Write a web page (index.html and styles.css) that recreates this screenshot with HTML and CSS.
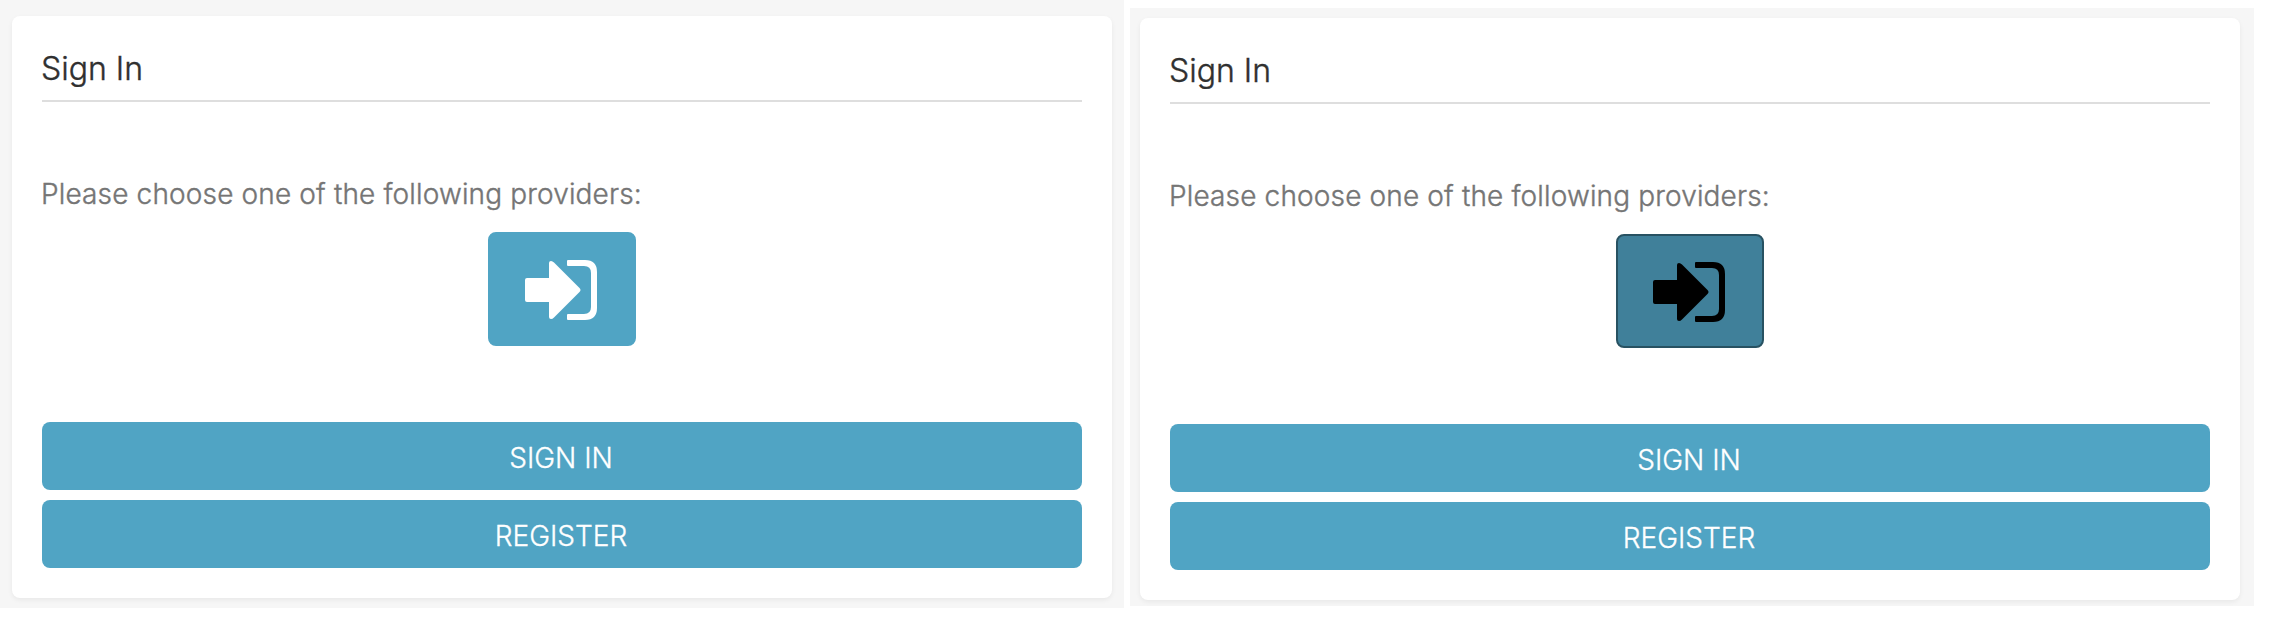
FILE: index.html
```html
<!DOCTYPE html>
<html lang="en">
<head>
<meta charset="utf-8">
<title>Sign In</title>
<link rel="stylesheet" href="styles.css">
</head>
<body>
<main class="comparison">
  <section class="panel panel-default">
    <div class="card">
      <h1 class="title">Sign In</h1>
      <p class="hint">Please choose one of the following providers:</p>
      <button class="provider" aria-label="Provider">
        <svg class="icon" viewBox="0 0 72 60" fill="currentColor"><path d="M2 18H24V3Q24 1 26 1Q27.500 1 29 2.500L54.500 28Q56.500 30 54.500 32L29 57.500Q27.500 59 26 59Q24 59 24 57V42H2Q0 42 0 40V20Q0 18 2 18Z"/><path d="M43 0H60Q72 0 72 12V48Q72 60 60 60H43Q42 60 42 59V55Q42 54 43 54H59Q66 54 66 47V13Q66 6 59 6H43Q42 6 42 5V1Q42 0 43 0Z"/></svg>
      </button>
      <div class="actions">
        <button class="action">SIGN IN</button>
        <button class="action">REGISTER</button>
      </div>
    </div>
  </section>
  <section class="panel panel-pressed">
    <div class="card">
      <h1 class="title">Sign In</h1>
      <p class="hint">Please choose one of the following providers:</p>
      <button class="provider provider-pressed" aria-label="Provider">
        <svg class="icon" viewBox="0 0 72 60" fill="currentColor"><path d="M2 18H24V3Q24 1 26 1Q27.500 1 29 2.500L54.500 28Q56.500 30 54.500 32L29 57.500Q27.500 59 26 59Q24 59 24 57V42H2Q0 42 0 40V20Q0 18 2 18Z"/><path d="M43 0H60Q72 0 72 12V48Q72 60 60 60H43Q42 60 42 59V55Q42 54 43 54H59Q66 54 66 47V13Q66 6 59 6H43Q42 6 42 5V1Q42 0 43 0Z"/></svg>
      </button>
      <div class="actions">
        <button class="action">SIGN IN</button>
        <button class="action">REGISTER</button>
      </div>
    </div>
  </section>
</main>
</body>
</html>
```
FILE: styles.css
```css
* { box-sizing: border-box; }
body { margin: 0; background: #fff; font-family: Inter, "Liberation Sans", sans-serif; }
.comparison { display: flex; align-items: flex-start; gap: 6px; }
.panel { width: 1124px; background: #f6f6f6; overflow: hidden; }
.panel-default { height: 608px; padding: 16px 12px 10px; }
.panel-pressed { height: 598px; margin-top: 8px; padding: 10px 14px 6px 10px; }
.card {
  display: flex;
  flex-direction: column;
  height: 582px;
  padding: 30px;
  border-radius: 8px;
  background: #fff;
  box-shadow: 0 2px 5px rgba(0, 0, 0, .06);
}
.title {
  height: 56px;
  margin: 0;
  padding-top: 3px;
  border-bottom: 2px solid #dedede;
  color: #303030;
  font-size: 32px;
  font-weight: 300;
  line-height: 39px;
  text-indent: -1px;
  -webkit-text-stroke: .4px currentColor;
}
.hint {
  margin: 72px 0 0;
  color: #757575;
  font-size: 28px;
  font-weight: 300;
  line-height: 40px;
  letter-spacing: .15px;
  text-indent: -1px;
  -webkit-text-stroke: .4px currentColor;
}
.provider {
  display: flex;
  align-items: center;
  justify-content: center;
  align-self: center;
  width: 148px;
  height: 114px;
  margin: 18px 0 0;
  padding: 2px 2px 0 0;
  border: 2px solid #50a4c4;
  border-radius: 8px;
  background: #50a4c4;
  color: #fff;
}
.provider-pressed { border-color: #285262; background: #40809a; color: #000; }
.icon { width: 72px; height: 60px; }
.actions { display: flex; flex-direction: column; gap: 10px; margin-top: auto; }
.action {
  height: 68px;
  margin: 0;
  padding: 4px 2px 0 0;
  border: 0;
  border-radius: 8px;
  background: #50a4c4;
  color: #fff;
  font: 300 28px/34px Inter, "Liberation Sans", sans-serif;
  -webkit-text-stroke: .3px currentColor;
}
```
